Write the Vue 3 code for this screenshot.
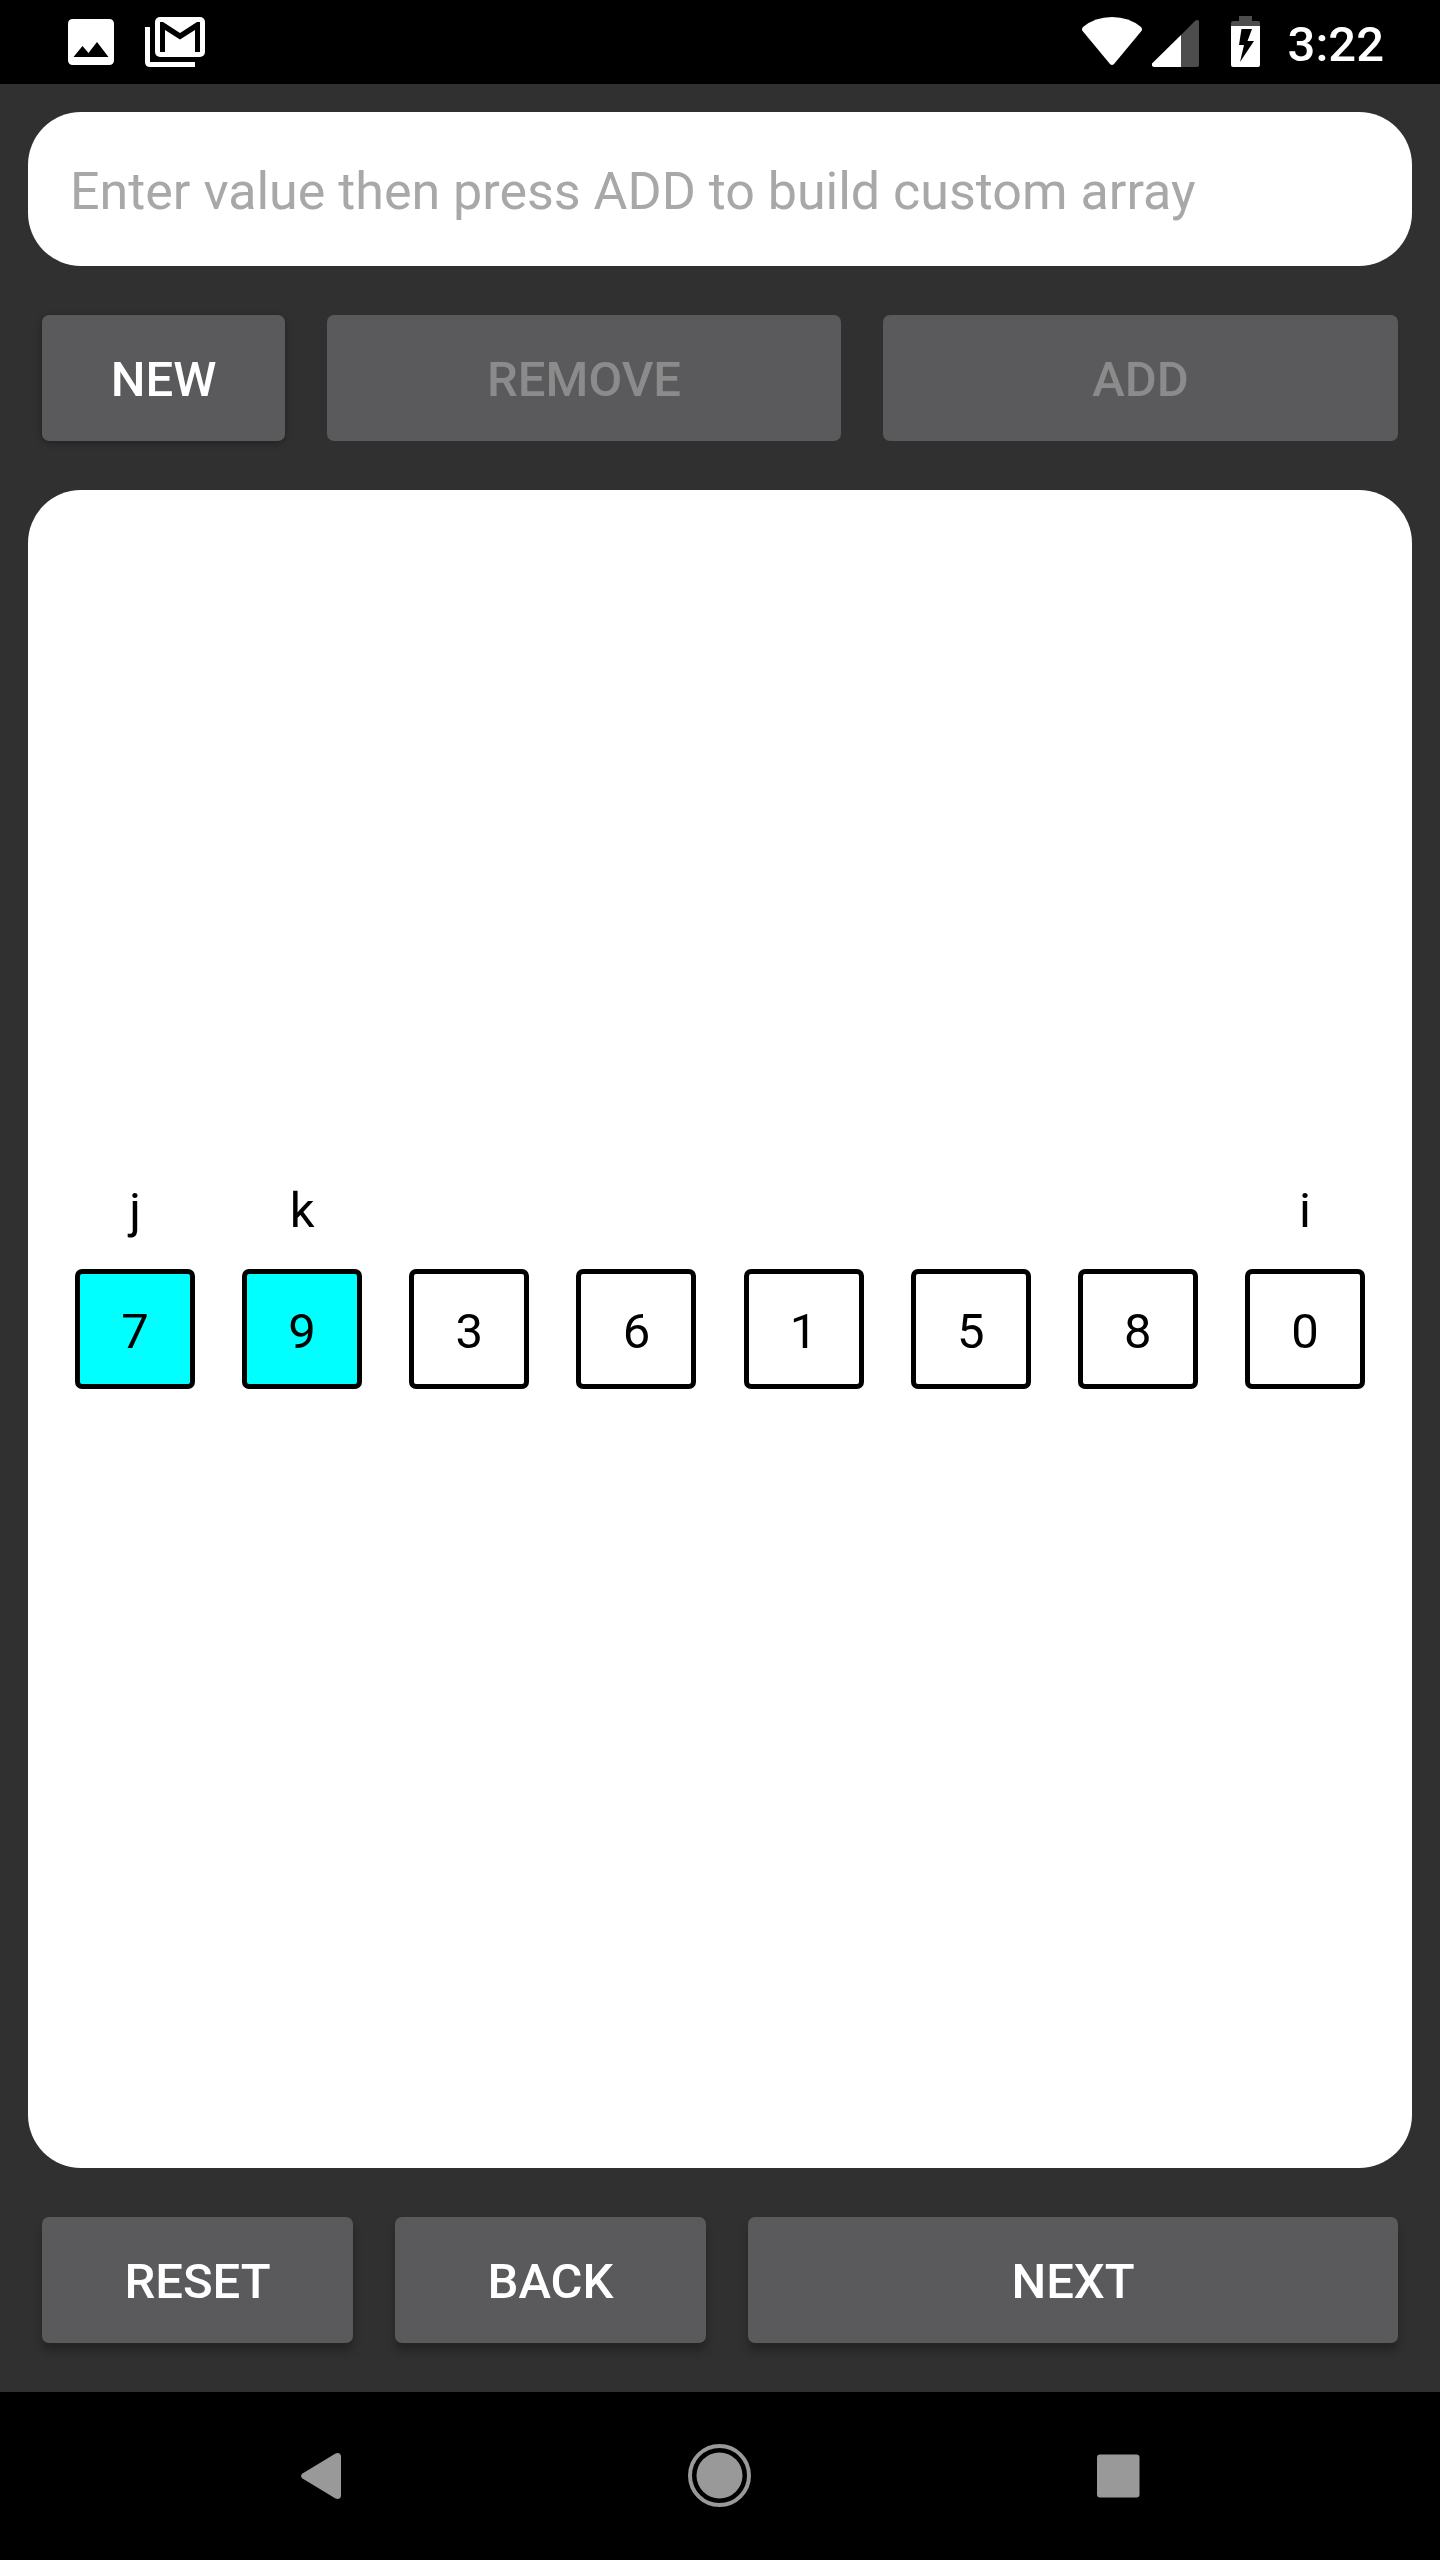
<script setup>
import { ref, computed } from 'vue'

const value = ref('')
const empty = computed(() => value.value === '')

const cells = [
  { value: 7, pointer: 'j', active: true },
  { value: 9, pointer: 'k', active: true },
  { value: 3, pointer: '', active: false },
  { value: 6, pointer: '', active: false },
  { value: 1, pointer: '', active: false },
  { value: 5, pointer: '', active: false },
  { value: 8, pointer: '', active: false },
  { value: 0, pointer: 'i', active: false },
]
</script>

<template>
  <div class="screen">
    <header class="status">
      <div class="notices">
        <svg width="46" height="52" viewBox="0 0 46 52" aria-label="Picture saved">
          <path fill="#fff" fill-rule="evenodd" d="M5 3H41Q46 3 46 8V44Q46 49 41 49H5Q0 49 0 44V8Q0 3 5 3ZM5.500 41H40.500L29 26L20.500 37L14.500 30Z" />
        </svg>
        <svg width="60" height="52" viewBox="0 0 60 52" aria-label="New mail">
          <path fill="#fff" d="M0 11H5V46H50V51H5Q0 51 0 46Z" />
          <rect x="10" y="1" width="50" height="40" rx="5" fill="#fff" />
          <path fill="#000" d="M15 36V6H18L35 17L52 6H55V36H50V14L35 23.500L20 14V36Z" />
        </svg>
      </div>
      <div class="system">
        <svg width="60" height="52" viewBox="0 0 60 52" aria-label="Wi-Fi">
          <path fill="#fff" d="M1 11Q13 1 30 1Q47 1 59 11Q61 13 59 15.500L32 48Q30 50 28 48L1 15.500Q-1 13 1 11Z" />
        </svg>
        <svg class="signal" width="47" height="52" viewBox="0 0 47 52" aria-label="Signal">
          <path fill="#4d4d4d" d="M29 19L43 5Q45 3 47 5V49Q47 51 45 51H29Z" />
          <path fill="#fff" d="M29 19V51H2Q-1 50 0 47.500Z" />
        </svg>
        <svg class="battery" width="29" height="52" viewBox="0 0 29 52" aria-label="Battery charging">
          <path fill="#4d4d4d" d="M8 0H21V5H27Q29 5 29 7V11H0V7Q0 5 2 5H8Z" />
          <path fill="#fff" d="M0 10H29V49Q29 51 27 51H2Q0 51 0 49Z" />
          <path fill="#000" d="M10.500 13H21L16.500 25H23L9 46L13 29H8Z" />
        </svg>
        <time class="clock">3:22</time>
      </div>
    </header>

    <main class="app">
      <input v-model="value" class="entry" type="text" aria-label="Array value" placeholder="Enter value then press ADD to build custom array" />

      <div class="row build">
        <button type="button" class="btn">NEW</button>
        <button type="button" class="btn" :disabled="empty">REMOVE</button>
        <button type="button" class="btn" :disabled="empty">ADD</button>
      </div>

      <section class="panel" aria-label="Array">
        <ol class="array">
          <li v-for="cell in cells" :key="cell.value">
            <span class="pointer">{{ cell.pointer }}</span>
            <span class="cell" :class="{ active: cell.active }">{{ cell.value }}</span>
          </li>
        </ol>
      </section>

      <div class="row steps">
        <button type="button" class="btn">RESET</button>
        <button type="button" class="btn">BACK</button>
        <button type="button" class="btn">NEXT</button>
      </div>
    </main>

    <nav class="navbar">
      <button type="button" aria-label="Back">
        <svg width="64" height="64" viewBox="0 0 64 64">
          <path fill="#999" d="M13.500 29.500L46.500 9.500Q51 8 52 12V52Q51 56 46.500 54.500L13.500 34.500Q10.500 32 13.500 29.500Z" />
        </svg>
      </button>
      <button type="button" aria-label="Home">
        <svg width="64" height="64" viewBox="0 0 64 64">
          <circle cx="31.500" cy="31.500" r="29.500" fill="none" stroke="#999" stroke-width="4" />
          <circle cx="31.500" cy="31.500" r="23" fill="#999" />
        </svg>
      </button>
      <button type="button" aria-label="Recent apps">
        <svg width="64" height="64" viewBox="0 0 64 64">
          <rect x="10" y="10.500" width="42.500" height="43" rx="3" fill="#999" />
        </svg>
      </button>
    </nav>
  </div>
</template>

<style>
body {
  margin: 0;
  background: #303030;
}
</style>

<style scoped>
.screen {
  display: flex;
  flex-direction: column;
  min-height: 100vh;
  background: #303030;
  font-family: Roboto, "Liberation Sans", sans-serif;
  font-size: 49px;
}

svg {
  display: block;
}

.status {
  display: flex;
  justify-content: space-between;
  height: 84px;
  padding: 0 56px 0 68px;
  background: #000;
}

.notices,
.system {
  display: flex;
  align-items: center;
}

.notices {
  gap: 31px;
}

.signal {
  margin-left: 10px;
}

.battery {
  margin: 0 28px 0 32px;
}

.clock {
  padding-top: 4px;
  color: #fff;
  font-weight: 500;
}

.app {
  display: flex;
  flex: 1;
  flex-direction: column;
  padding: 28px 28px 49px;
}

.entry {
  box-sizing: border-box;
  width: 100%;
  height: 154px;
  padding: 4px 42px 0;
  border: 0;
  border-radius: 53px;
  outline: 0;
  background: #fff;
  color: #000;
  font-family: inherit;
  font-size: 52px;
}

.entry::placeholder {
  color: #a8a8a8;
  opacity: 1;
}

.row {
  display: grid;
  gap: 42px;
  margin: 49px 14px;
}

.build {
  grid-template-columns: 243fr 514fr 515fr;
}

.steps {
  grid-template-columns: 311fr 311fr 650fr;
  margin-bottom: 0;
}

.btn {
  height: 126px;
  padding: 3px 0 0;
  border: 0;
  border-radius: 7px;
  background: #5a595b;
  box-shadow: 0 2px 7px rgba(0, 0, 0, 0.3);
  color: #fff;
  font-family: inherit;
  font-size: 49px;
  font-weight: 500;
}

.steps .btn {
  box-shadow: 0 8px 9px rgba(0, 0, 0, 0.26);
}

.btn:disabled {
  box-shadow: none;
  color: #8b8b8c;
}

.panel {
  display: flex;
  flex: 1;
  flex-direction: column;
  justify-content: center;
  border-radius: 53px;
  background: #fff;
}

.array {
  display: flex;
  justify-content: space-between;
  margin: 0;
  padding: 0 47px 116px;
  list-style: none;
  color: #000;
  text-align: center;
}

.pointer {
  display: block;
  height: 116px;
  line-height: 116px;
}

.cell {
  display: flex;
  box-sizing: border-box;
  align-items: center;
  justify-content: center;
  width: 120px;
  height: 120px;
  padding-top: 4px;
  border: 5px solid #000;
  border-radius: 7px;
}

.active {
  background: #0ff;
}

.navbar {
  display: grid;
  grid-template-columns: repeat(3, 1fr);
  height: 168px;
  padding: 0 122px;
  background: #000;
}

.navbar button {
  display: flex;
  align-items: center;
  justify-content: center;
  padding: 0;
  border: 0;
  background: none;
}
</style>
